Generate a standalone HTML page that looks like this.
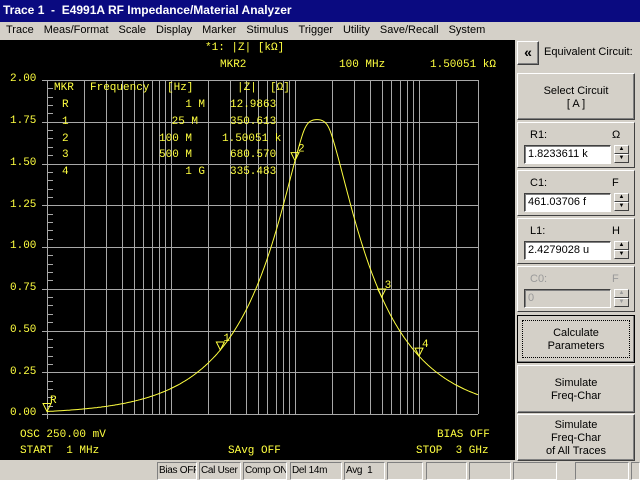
<!DOCTYPE html>
<html><head><meta charset="utf-8"><style>
*{margin:0;padding:0;box-sizing:border-box}
body{width:640px;height:480px;overflow:hidden;background:#d4d0c8;font-family:"Liberation Sans",sans-serif;font-size:11px;color:#000;position:relative}
.a{position:absolute;white-space:nowrap}
#title{left:0;top:0;width:640px;height:22px;background:#0a0a80;color:#fff;font-weight:bold;font-size:12px;line-height:21px;padding-left:3px}
#menu{left:0;top:22px;width:640px;height:18px;font-size:11px;line-height:17px}
#menu span{margin-left:6px;margin-right:4px}
#black{left:0;top:40px;width:515px;height:420px;background:#000}
.y{color:#ffff40;font-family:"Liberation Mono",monospace;font-size:11px;position:absolute;white-space:nowrap}
.btn{position:absolute;left:517px;width:118px;background:#d4d0c8;border:1px solid;border-color:#fff #404040 #404040 #fff;box-shadow:inset -1px -1px #808080;text-align:center;font-size:11px;line-height:13px}
.grp{position:absolute;left:517px;width:118px;height:46px;border:1px solid;border-color:#fff #404040 #404040 #fff}
.grp .l{position:absolute;left:12px;top:6px}
.grp .u{position:absolute;left:94px;top:6px}
.grp .in{position:absolute;left:6px;top:22px;width:87px;height:19px;background:#fff;border:1px solid;border-color:#404040 #fff #fff #404040;box-shadow:inset 1px 1px #808080;padding:2px 3px;font-size:11px}
.grp .sp{position:absolute;left:96px;top:22px;width:15px;height:19px}
.grp .sp div{height:9px;border:1px solid;border-color:#fff #404040 #404040 #fff;background:#d4d0c8;font-size:6px;line-height:6px;text-align:center}
.dis{color:#9a9a9a}
.dis .in{background:#d4d0c8!important}
.st{position:absolute;top:462px;height:18px;border:1px solid;border-color:#808080 #fff #fff #808080;font-size:10px;letter-spacing:-0.3px;line-height:16px;padding-left:1px;white-space:nowrap;overflow:hidden}
</style></head><body>
<div id="title" class="a">Trace 1 &nbsp;- &nbsp;E4991A RF Impedance/Material Analyzer</div>
<div id="menu" class="a"><span>Trace</span><span>Meas/Format</span><span>Scale</span><span>Display</span><span>Marker</span><span>Stimulus</span><span>Trigger</span><span>Utility</span><span>Save/Recall</span><span>System</span></div>
<div id="black" class="a"></div>
<svg class="a" style="left:0;top:40px" width="515" height="420" viewBox="0 40 515 420" id="sv">
<g id="grid" stroke="#a8a8a8" stroke-width="1" shape-rendering="crispEdges"></g>
<polyline id="curve" fill="none" stroke="#ffff40" stroke-width="1"/>
<g id="mk" fill="none" stroke="#ffff40" stroke-width="1"></g>
</svg>
<div class="y" style="left:205px;top:42px">*1: |Z| [kΩ]</div>
<div class="y" style="left:220px;top:59px">MKR2</div>
<div class="y" style="left:339px;top:59px">100 MHz</div>
<div class="y" style="left:430px;top:59px">1.50051 kΩ</div>
<div class="y" style="left:10px;top:73px">2.00</div>
<div class="y" style="left:10px;top:115px">1.75</div>
<div class="y" style="left:10px;top:157px">1.50</div>
<div class="y" style="left:10px;top:199px">1.25</div>
<div class="y" style="left:10px;top:240px">1.00</div>
<div class="y" style="left:10px;top:282px">0.75</div>
<div class="y" style="left:10px;top:324px">0.50</div>
<div class="y" style="left:10px;top:366px">0.25</div>
<div class="y" style="left:10px;top:407px">0.00</div>
<div class="y" style="left:54px;top:82px">MKR</div><div class="y" style="left:90px;top:82px">Frequency</div><div class="y" style="left:167px;top:82px">[Hz]</div><div class="y" style="left:237px;top:82px">|Z| &nbsp;[Ω]</div>
<div class="y" style="left:62px;top:99px">R</div><div class="y" style="left:172px;top:99px">&nbsp;&nbsp;1 M</div><div class="y" style="left:230px;top:99px">12.9863</div>
<div class="y" style="left:62px;top:116px">1</div><div class="y" style="left:165px;top:116px">&nbsp;25 M</div><div class="y" style="left:230px;top:116px">350.613</div>
<div class="y" style="left:62px;top:133px">2</div><div class="y" style="left:159px;top:133px">100 M</div><div class="y" style="left:222px;top:133px">1.50051 k</div>
<div class="y" style="left:62px;top:149px">3</div><div class="y" style="left:159px;top:149px">500 M</div><div class="y" style="left:230px;top:149px">680.570</div>
<div class="y" style="left:62px;top:166px">4</div><div class="y" style="left:172px;top:166px">&nbsp;&nbsp;1 G</div><div class="y" style="left:230px;top:166px">335.483</div>
<div class="y" style="left:50px;top:395px">R</div>
<div class="y" style="left:20px;top:429px">OSC 250.00 mV</div>
<div class="y" style="left:437px;top:429px">BIAS OFF</div>
<div class="y" style="left:20px;top:445px">START &nbsp;1 MHz</div>
<div class="y" style="left:228px;top:445px">SAvg OFF</div>
<div class="y" style="left:416px;top:445px">STOP &nbsp;3 GHz</div>

<div class="btn" style="width:22px;height:24px;top:41px;font-weight:bold;font-size:14px;line-height:20px">«</div>
<div class="a" style="left:544px;top:46px;font-size:11px">Equivalent Circuit:</div>
<div class="btn" style="top:73px;height:47px;padding-top:11px">Select Circuit<br>[ A ]</div>
<div class="grp" style="top:122px"><span class="l">R1:</span><span class="u">Ω</span><div class="in">1.8233611 k</div><div class="sp"><div>▲</div><div>▼</div></div></div>
<div class="grp" style="top:170px"><span class="l">C1:</span><span class="u">F</span><div class="in">461.03706 f</div><div class="sp"><div>▲</div><div>▼</div></div></div>
<div class="grp" style="top:218px"><span class="l">L1:</span><span class="u">H</span><div class="in">2.4279028 u</div><div class="sp"><div>▲</div><div>▼</div></div></div>
<div class="grp dis" style="top:266px"><span class="l">C0:</span><span class="u">F</span><div class="in">0</div><div class="sp"><div>▲</div><div>▼</div></div></div>
<div class="btn" style="top:315px;height:48px;border:1px solid #000;padding-top:11px"><div style="position:absolute;left:4px;top:4px;right:4px;bottom:4px;border:1px dotted #000"></div>Calculate<br>Parameters</div>
<div class="btn" style="top:365px;height:48px;padding-top:11px">Simulate<br>Freq-Char</div>
<div class="btn" style="top:414px;height:47px;padding-top:4px">Simulate<br>Freq-Char<br>of All Traces</div>

<div class="st" style="left:157px;width:40px">Bias OFF</div>
<div class="st" style="left:199px;width:42px">Cal User</div>
<div class="st" style="left:243px;width:44px">Comp ON</div>
<div class="st" style="left:290px;width:52px">Del 14m</div>
<div class="st" style="left:344px;width:41px">Avg &nbsp;1</div>
<div class="st" style="left:387px;width:36px"></div>
<div class="st" style="left:426px;width:41px"></div>
<div class="st" style="left:469px;width:42px"></div>
<div class="st" style="left:513px;width:44px"></div>
<div class="st" style="left:575px;width:54px"></div>
<div class="st" style="left:631px;width:9px"></div>
<script>
function X(f){return 47+124*Math.log10(f/1e6);}
function Y(z){return 414-z/2000*334;}
var g=document.getElementById('grid'),s='';
function ln(x1,y1,x2,y2){s+='<line x1="'+x1+'" y1="'+y1+'" x2="'+x2+'" y2="'+y2+'"/>';}
for(var i=0;i<=8;i++){var y=Math.round(80+i*334/8)+.5;ln(42,y,478,y);}
for(var i=0;i<40;i++){var y=Math.round(80+i*334/40)+.5;ln(47,y,53,y);}
for(var d=1e6;d<=1e9;d*=10)for(var k=1;k<=9;k++){var f=d*k;if(f>3e9)break;var x=Math.round(X(f))+.5;ln(x,80,x,414);}
ln(478.5,80,478.5,414);ln(47.5,80,47.5,419);
g.innerHTML=s;
var R=1823.3611,C=461.03706e-15,L=2.4279028e-6;
function Z0(f){var w=2*Math.PI*f;var G=1/R,B=w*C-1/(w*L);return 1/Math.sqrt(G*G+B*B);}
function Z(f){var z=Z0(f);var c=1650,m=1780;if(z>c){var t=z-c,r=m-c;z=c+r*Math.tanh(t/r);}return z;}
var p=[];for(var x=47;x<=478;x+=1){var f=1e6*Math.pow(10,(x-47)/124);p.push(x+','+Y(Z(f)).toFixed(1));}
document.getElementById('curve').setAttribute('points',p.join(' '));
var m='',mk=[[1e6,''],[25e6,'1'],[100e6,'2'],[500e6,'3'],[1e9,'4']];
mk.forEach(function(a){var x=X(a[0]),y=Y(Z(a[0]));m+='<path d="M'+(x-4)+' '+(y-8)+'h8l-4 8z"/>';if(a[1])m+='<text x="'+(x+3)+'" y="'+(y-9)+'" fill="#ffff40" stroke="none" font-family="Liberation Mono" font-size="11">'+a[1]+'</text>';});
document.getElementById('mk').innerHTML=m;
</script>
</body></html>
